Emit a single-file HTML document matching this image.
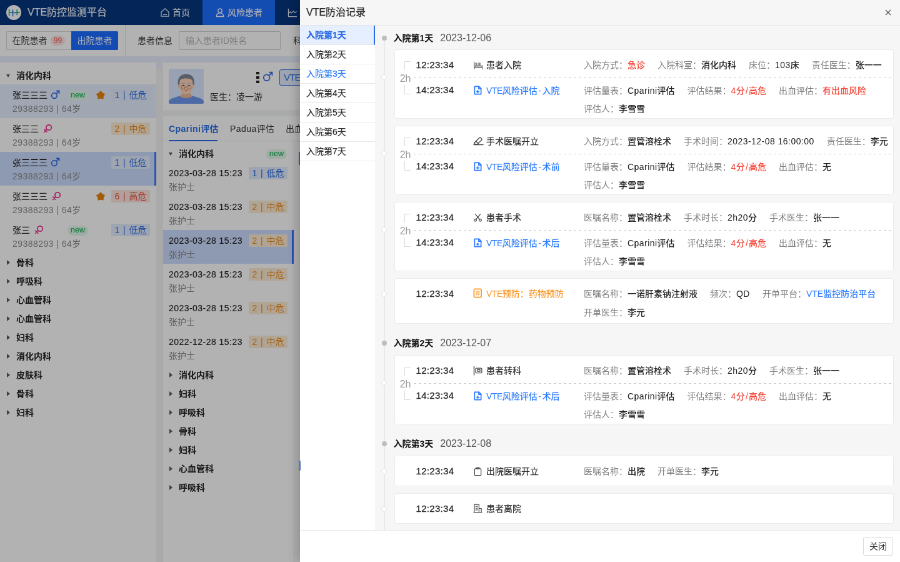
<!DOCTYPE html><html lang="zh"><head><meta charset="utf-8"><title>VTE防控监测平台</title><style>
*{box-sizing:border-box;margin:0;padding:0}
html,body{width:900px;height:562px;overflow:hidden;background:#fff}
body{font-family:"Liberation Sans","Noto Sans CJK SC",sans-serif;font-size:14px;color:#333}
#root{will-change:transform;position:absolute;left:0;top:0;width:1440px;height:900px;transform:scale(.625);transform-origin:0 0;overflow:hidden;background:#e8eefc}
.abs{position:absolute}
.n{letter-spacing:.46px}.w{letter-spacing:1px}
/* top bar */
#top{position:absolute;left:0;top:0;width:1440px;height:40px;background:#07367f;color:#fff}
#top .logo{position:absolute;left:10px;top:8px;width:24px;height:24px;border-radius:50%;background:#fff}
#top .title{position:absolute;left:44px;-webkit-text-stroke:.2px #f2f5fa;top:0;line-height:40px;font-size:16px;color:#f2f5fa;white-space:nowrap}
#top .nav{position:absolute;top:0;height:40px;line-height:40px;font-size:14px;color:#e6ecf7;white-space:nowrap;-webkit-text-stroke:.2px #e6ecf7}
#top .nav.on{background:#1e6fff;color:#fff}
/* toolbar */
#bar{position:absolute;left:0;top:40px;width:1440px;height:50px;background:#fff}
.seg{position:absolute;top:10px;height:30px;line-height:28px;font-size:14px;white-space:nowrap}
/* left panel */
#lp{position:absolute;left:0;top:100px;width:250px;height:800px;background:#fff}
.dh{position:absolute;left:0;height:30px;line-height:30px;font-weight:700;font-size:14px;color:#222;white-space:nowrap}
.dh i{position:absolute;top:12px;width:0;height:0;border:4px solid transparent}
.dh i.r{border-left:5px solid #5a5a5a;border-right:0;top:11px}
.dh i.d{border-top:5px solid #5a5a5a;border-bottom:0;border-left-width:3.5px;border-right-width:3.5px;top:13px}
.it{position:absolute;left:0;height:54px;white-space:nowrap}
.it .l1{position:absolute;left:20px;top:5.500px;line-height:23px;color:#333;-webkit-text-stroke:.15px #333}
.it .l2{position:absolute;left:20px;top:28px;line-height:23px;color:#8c8c8c}
.tag{position:absolute;height:20px;line-height:20px;width:62px;text-align:center;border-radius:2px;font-size:14px;white-space:nowrap}
.tag.lo{color:#2b6de5;background:#e2ebfd}
.tag.mi{color:#f08a19;background:#fdecd6}
.tag.hi{color:#e8543c;background:#fde4df}
.new{position:absolute;height:16px;line-height:15px;width:33px;text-align:center;border-radius:8px;font-size:12.500px;color:#22b862;background:#e2f7ea;-webkit-text-stroke:.2px #22b862}
/* right panel */
.card{position:absolute;background:#fff}
/* modal */
#mask{position:absolute;left:0;top:0;width:1440px;height:900px;background:rgba(0,0,0,.3)}
#modal{position:absolute;left:480px;top:0;width:960px;height:900px;background:#fff;box-shadow:-5px 0 14px rgba(0,0,0,.2)}
#mh{position:absolute;left:0;top:0;width:960px;height:41px;background:#f6f6f6;border-bottom:1px solid #e5e5e5}
#mh .t{position:absolute;left:10px;top:0;line-height:40px;font-size:16px;color:#2a2a2a;-webkit-text-stroke:.25px #2a2a2a}
#tabs{position:absolute;left:0;top:41px;width:120px}
#tabs div{height:31px;line-height:30px;border-bottom:1px solid #e6e6e6;padding-left:10px;font-size:14px;color:#2a2a2a;white-space:nowrap;-webkit-text-stroke:.2px}
#tabs div.on{background:#e6efff;color:#2b6de5;font-weight:700;border-right:2px solid #2b6de5}
#tabs div.hv{color:#2b7bff}
#mc{position:absolute;left:120px;top:41px;width:840px;height:807px;background:#f6f6f6;overflow:hidden}
#mf{position:absolute;left:0;top:848px;width:960px;height:52px;background:#fff;border-top:1px solid #e8e8e8}
#mf .btn{position:absolute;left:901px;top:10px;width:48px;height:30px;line-height:28px;text-align:center;border:1px solid #d9d9d9;border-radius:3px;font-size:14px;color:#333;background:#fff}
.tl{position:absolute;left:13.7px;top:19px;width:2px;height:800px;background:#e9e9e9}
.dot{position:absolute;left:10.7px;width:8px;height:8px;border-radius:50%;background:#bdbdbd}
.cir{position:absolute;left:10.2px;width:9px;height:9px;border-radius:50%;background:#fff;border:1px solid #e2e2e2}
.day{position:absolute;left:29.5px;height:38px;line-height:38px;white-space:nowrap;font-weight:700;color:#111;font-size:14px}
.day span{font-weight:400;font-size:16px;color:#555;margin-left:11px}
.mcard{position:absolute;left:31px;width:798.500px;background:#fff;border:1px solid #ebebeb;border-radius:3px}
.mcard .tm{position:absolute;left:33.5px;font-size:15px;letter-spacing:.3px;color:#2a2a2a;line-height:30px;margin-top:-.5px;-webkit-text-stroke:.3px #2a2a2a;white-space:nowrap}
.mcard .ev{position:absolute;left:146px;line-height:30px;font-size:14px;font-weight:500;color:#333;white-space:nowrap}.mcard .ev i{font-style:normal;letter-spacing:-.5px}.mcard .ev u{text-decoration:none;padding:0 1.6px}
.mcard .ev.b{color:#2b7bff}
.mcard .ev.o{color:#fa9a2c}
.mcard svg.ic{position:absolute;left:125px;width:15px;height:15px}
.mcard .ln{position:absolute;left:302px;line-height:30px;font-size:14px;white-space:nowrap;color:#808080}
.mcard .ln b{font-weight:500;color:#222;margin-right:20px}
.mcard .ln b.r{color:#f5483b}
.mcard .ln b.l{color:#2b7bff}
.mcard .dash{position:absolute;left:30px;right:0;top:43.700px;height:1.600px;background:repeating-linear-gradient(90deg,#c9c9c9 0 4.500px,transparent 4.500px 8px)}
.mcard .h2{position:absolute;left:7.700px;top:34.500px;line-height:22px;font-size:16px;color:#999}
.mcard .br{position:absolute;left:15px;width:10px;border-left:1px solid #d9d9d9}
.mcard .br.t{top:18px;height:14px;border-top:1px solid #d9d9d9}
.mcard .br.bt{top:56px;height:14.500px;border-bottom:1px solid #d9d9d9}
</style></head><body><div id="root">
<div id="top">
<div class="logo"><svg width="24" height="24" viewBox="0 0 24 24" fill="none" stroke-width="1.800" stroke-linecap="round"><path d="M4.700 7.500v9M4.700 12h5.500" stroke="#43b36f"/><path d="M17.200 8v7.500M17.200 12h3.800" stroke="#43b36f"/><path d="M10.400 8.200v9.300M10.400 12.300h6" stroke="#2f86e0"/></svg></div>
<div class="title">VTE防控监测平台</div>
<svg class="abs" style="left:256px;top:12px" width="16" height="16" viewBox="0 0 16 16" fill="none" stroke="#e6ecf7" stroke-width="1.3" stroke-linejoin="round" stroke-linecap="round"><path d="M2 7.200L8 1.800l6 5.400V14.200H2z"/><path d="M5.500 11.300h5"/></svg>
<div class="nav" style="left:276px">首页</div>
<div class="nav on" style="left:323.500px;width:116.500px"></div>
<svg class="abs" style="left:344px;top:12px" width="16" height="16" viewBox="0 0 16 16" fill="none" stroke="#fff" stroke-width="1.3" stroke-linejoin="round" stroke-linecap="round"><circle cx="8" cy="5" r="3.200"/><path d="M2.300 14.500c0-3.600 2.400-5.600 5.700-5.600s5.700 2 5.700 5.600z"/></svg>
<div class="nav" style="left:364px;color:#fff">风险患者</div>
<svg class="abs" style="left:460px;top:12.500px" width="16" height="15" viewBox="0 0 17 16" fill="none" stroke="#e6ecf7" stroke-width="1.300" stroke-linejoin="round" stroke-linecap="round"><path d="M1.500 1.500v13h14"/><path d="M1.500 10l3-4 2.500 2.500 3-3.500 2.500 3 2.500-2"/></svg>
</div>
<div id="bar">
<div class="seg" style="left:10px;width:104px;border:1px solid #d9d9d9;border-right:0;border-radius:2px 0 0 2px;color:#333"><span class="abs" style="left:8.500px">在院患者</span><span class="abs" style="left:70px;top:6px;height:16px;line-height:16px;width:23px;text-align:center;border-radius:8px;background:#fde2e0;color:#f0574a;font-size:12px">99</span></div>
<div class="seg" style="left:114px;width:75px;background:#1e6cff;color:#fff;border-radius:0 2px 2px 0;line-height:30px;text-align:center">出院患者</div>
<div class="abs" style="left:200px;top:0;width:1px;height:50px;background:#e3e3e3"></div>
<div class="seg" style="left:220px;line-height:30px;color:#333">患者信息</div>
<div class="seg" style="left:286px;width:163px;border:1px solid #d0d0d0;border-radius:2px;color:#b5b5b5;padding-left:10px">输入患者ID姓名</div>
<div class="seg" style="left:469px;line-height:30px;color:#333">科室</div>
</div>
<div id="lp">
<div class="dh" style="top:6px;left:0"><i class="d" style="left:10px"></i><span class="abs" style="left:26px">消化内科</span></div>
<div class="it" style="top:35px;width:250px;background:#e6eeff;"><div class="l1">张三三三</div><div class="l2"><span class="n">29388293 | 64</span>岁</div><svg class="abs" style="left:81px;top:9px" width="15" height="15" viewBox="0 0 16 16" fill="none" stroke="#2b6de5" stroke-width="1.7" stroke-linecap="round"><circle cx="6.3" cy="9.7" r="4.6"/><path d="M9.6 6.4L14.3 1.7M10.2 1.5h4.3v4.3"/></svg><div class="new" style="left:108px;top:10px">new</div><svg class="abs" style="left:153px;top:9px" width="16" height="16" viewBox="0 0 16 16"><path d="M8.00 2.80L10.17 5.61L13.52 6.81L11.52 9.74L11.41 13.29L8.00 12.30L4.59 13.29L4.48 9.74L2.48 6.81L5.83 5.61z" fill="#e9850a" stroke="#e9850a" stroke-width="2.600" stroke-linejoin="round"/></svg><div class="tag lo" style="left:178px;top:7px"><span class="w">1 | </span>低危</div></div>
<div class="it" style="top:89px;width:250px;"><div class="l1">张三三</div><div class="l2"><span class="n">29388293 | 64</span>岁</div><svg class="abs" style="left:68.5px;top:9px" width="15" height="15" viewBox="0 0 16 16" fill="none" stroke="#ee3a94" stroke-width="2" stroke-linecap="round"><circle cx="9.7" cy="6.3" r="4.5"/><path d="M6.4 9.6L1.8 14.2M2 9.8l4.2 4.2"/></svg><div class="tag mi" style="left:178px;top:7px"><span class="w">2 | </span>中危</div></div>
<div class="it" style="top:143px;width:250px;background:#ccdcff;"><div class="abs" style="right:0;top:0;width:3px;height:54px;background:#3b78ff"></div><div class="l1">张三三三</div><div class="l2"><span class="n">29388293 | 64</span>岁</div><svg class="abs" style="left:81px;top:9px" width="15" height="15" viewBox="0 0 16 16" fill="none" stroke="#2b6de5" stroke-width="1.7" stroke-linecap="round"><circle cx="6.3" cy="9.7" r="4.6"/><path d="M9.6 6.4L14.3 1.7M10.2 1.5h4.3v4.3"/></svg><div class="tag lo" style="left:178px;top:7px"><span class="w">1 | </span>低危</div></div>
<div class="it" style="top:197px;width:250px;"><div class="l1">张三三三</div><div class="l2"><span class="n">29388293 | 64</span>岁</div><svg class="abs" style="left:82.5px;top:9px" width="15" height="15" viewBox="0 0 16 16" fill="none" stroke="#ee3a94" stroke-width="2" stroke-linecap="round"><circle cx="9.7" cy="6.3" r="4.5"/><path d="M6.4 9.6L1.8 14.2M2 9.8l4.2 4.2"/></svg><svg class="abs" style="left:153px;top:9px" width="16" height="16" viewBox="0 0 16 16"><path d="M8.00 2.80L10.17 5.61L13.52 6.81L11.52 9.74L11.41 13.29L8.00 12.30L4.59 13.29L4.48 9.74L2.48 6.81L5.83 5.61z" fill="#e9850a" stroke="#e9850a" stroke-width="2.600" stroke-linejoin="round"/></svg><div class="tag hi" style="left:178px;top:7px"><span class="w">6 | </span>高危</div></div>
<div class="it" style="top:251px;width:250px;"><div class="l1">张三</div><div class="l2"><span class="n">29388293 | 64</span>岁</div><svg class="abs" style="left:54.5px;top:9px" width="15" height="15" viewBox="0 0 16 16" fill="none" stroke="#ee3a94" stroke-width="2" stroke-linecap="round"><circle cx="9.7" cy="6.3" r="4.5"/><path d="M6.4 9.6L1.8 14.2M2 9.8l4.2 4.2"/></svg><div class="new" style="left:108px;top:10px">new</div><div class="tag lo" style="left:178px;top:7px"><span class="w">1 | </span>低危</div></div>
<div class="dh" style="top:305px"><i class="r" style="left:11px"></i><span class="abs" style="left:26px">骨科</span></div>
<div class="dh" style="top:335px"><i class="r" style="left:11px"></i><span class="abs" style="left:26px">呼吸科</span></div>
<div class="dh" style="top:365px"><i class="r" style="left:11px"></i><span class="abs" style="left:26px">心血管科</span></div>
<div class="dh" style="top:395px"><i class="r" style="left:11px"></i><span class="abs" style="left:26px">心血管科</span></div>
<div class="dh" style="top:425px"><i class="r" style="left:11px"></i><span class="abs" style="left:26px">妇科</span></div>
<div class="dh" style="top:455px"><i class="r" style="left:11px"></i><span class="abs" style="left:26px">消化内科</span></div>
<div class="dh" style="top:485px"><i class="r" style="left:11px"></i><span class="abs" style="left:26px">皮肤科</span></div>
<div class="dh" style="top:515px"><i class="r" style="left:11px"></i><span class="abs" style="left:26px">骨科</span></div>
<div class="dh" style="top:545px"><i class="r" style="left:11px"></i><span class="abs" style="left:26px">妇科</span></div>
</div>
<div class="abs" style="left:260px;top:170px;width:1180px;height:20px;background:#f3f4f4"></div>
<div class="card" style="left:260px;top:100px;width:1180px;height:76px">
<svg class="abs" style="left:10px;top:10px" width="56" height="56" viewBox="0 0 56 56"><rect width="56" height="56" rx="2.500" fill="#dbe8ff"/><path d="M0 56V53c0-3 3-5 8-6.500l9-3h22l9 3c5 1.500 8 3.500 8 6.500V53.500a2.500 2.500 0 0 1-2.500 2.500H2.500A2.500 2.500 0 0 1 0 53.500z" fill="#6f97ee"/><path d="M21.500 36h13v5l4 2.500c-4 4.500-17 4.500-21 0l4-2.500z" fill="#f0b897"/><path d="M14.800 25c-1.500-10 4-16.500 13.200-16.500S42 15 40.700 25l-1.700 3H16.500z" fill="#7e8796"/><ellipse cx="16.800" cy="27.500" rx="1.800" ry="2.600" fill="#f7c4a4"/><ellipse cx="38.800" cy="27.500" rx="1.800" ry="2.600" fill="#f7c4a4"/><path d="M17.300 22c0-4.500 3-6.500 10.500-6.500s10.500 2 10.500 6.500v8.500c0 5.500-4.500 10-10.500 10S17.300 36 17.300 30.500z" fill="#ffd3b6"/><path d="M20.500 23.600h5M30 23.600h5" stroke="#c4c7cf" stroke-width="1.600" stroke-linecap="round"/><circle cx="23.300" cy="26.800" r="1.100" fill="#4a2f25"/><circle cx="32.300" cy="26.800" r="1.100" fill="#4a2f25"/><circle cx="23" cy="29.500" r="3.100" fill="none" stroke="#8a6656" stroke-width=".7"/><circle cx="32.600" cy="29.500" r="3.100" fill="none" stroke="#8a6656" stroke-width=".7"/><path d="M26.100 29.300h3.400" stroke="#8a6656" stroke-width=".7"/><path d="M25 33.300c1.800.9 4 .9 5.800 0-.8 2.500-5 2.500-5.800 0z" fill="#d4735a"/></svg>
<div class="abs" style="left:149.500px;top:15px;width:5px;height:4px;background:#222;box-shadow:0 7px 0 #222,0 14px 0 #222"></div>
<svg class="abs" style="left:160px;top:14px" width="17" height="17" viewBox="0 0 16 16" fill="none" stroke="#2b6de5" stroke-width="1.7" stroke-linecap="round"><circle cx="6.3" cy="9.7" r="4.6"/><path d="M9.6 6.4L14.3 1.7M10.2 1.5h4.3v4.3"/></svg>
<div class="abs" style="left:187px;top:10.500px;width:60px;height:26px;line-height:24px;border:1px solid #2b6de5;border-radius:3px;background:#e3ecfd;color:#2b6de5;font-size:15.500px;letter-spacing:-1.100px;padding-left:6px">VTE</div>
<div class="abs" style="left:76px;top:44px;line-height:22px;color:#333;white-space:nowrap">医生：凌一游</div>
</div>
<div class="card" style="left:260px;top:186px;width:1180px;height:714px">
<div class="abs" style="left:0;top:39px;width:1180px;height:1px;background:#ebebeb"></div>
<div class="abs" style="left:10px;top:8px;line-height:24px;font-weight:700;color:#2b6de5;white-space:nowrap"><span class="n">Cparini</span>评估</div>
<div class="abs" style="left:10px;top:37.500px;width:78px;height:2.500px;background:#2b6de5"></div>
<div class="abs" style="left:108px;top:8px;line-height:24px;color:#333;white-space:nowrap"><span class="n">Padua</span>评估</div>
<div class="abs" style="left:197px;top:8px;line-height:24px;color:#333;white-space:nowrap">出血评估</div>
<div class="abs" style="left:210px;top:40px;width:1px;height:674px;background:#e6e6e6"></div>
<div class="abs" style="left:217.500px;top:57px;width:3px;height:21px;background:#5a8cf0"></div>
<div class="dh" style="top:45px"><i class="d" style="left:10px"></i><span class="abs" style="left:26px">消化内科</span></div>
<div class="new" style="left:166px;top:53px">new</div>
<div class="it" style="top:74px;width:210px;"><div class="l1" style="left:10px;top:5.500px;color:#222"><span class="n">2023-03-28 15:23</span></div><div class="l2" style="left:10px;top:28px">张护士</div><div class="tag lo" style="left:138px;top:7px"><span class="w">1 | </span>低危</div></div>
<div class="it" style="top:128px;width:210px;"><div class="l1" style="left:10px;top:5.500px;color:#222"><span class="n">2023-03-28 15:23</span></div><div class="l2" style="left:10px;top:28px">张护士</div><div class="tag mi" style="left:138px;top:7px"><span class="w">2 | </span>中危</div></div>
<div class="it" style="top:182px;width:210px;background:#ccdcff;"><div class="abs" style="right:0;top:0;width:3px;height:54px;background:#3b78ff"></div><div class="l1" style="left:10px;top:5.500px;color:#222"><span class="n">2023-03-28 15:23</span></div><div class="l2" style="left:10px;top:28px">张护士</div><div class="tag mi" style="left:138px;top:7px"><span class="w">2 | </span>中危</div></div>
<div class="it" style="top:236px;width:210px;"><div class="l1" style="left:10px;top:5.500px;color:#222"><span class="n">2023-03-28 15:23</span></div><div class="l2" style="left:10px;top:28px">张护士</div><div class="tag mi" style="left:138px;top:7px"><span class="w">2 | </span>中危</div></div>
<div class="it" style="top:290px;width:210px;"><div class="l1" style="left:10px;top:5.500px;color:#222"><span class="n">2023-03-28 15:23</span></div><div class="l2" style="left:10px;top:28px">张护士</div><div class="tag mi" style="left:138px;top:7px"><span class="w">2 | </span>中危</div></div>
<div class="it" style="top:344px;width:210px;"><div class="l1" style="left:10px;top:5.500px;color:#222"><span class="n">2022-12-28 15:23</span></div><div class="l2" style="left:10px;top:28px">张护士</div><div class="tag mi" style="left:138px;top:7px"><span class="w">2 | </span>中危</div></div>
<div class="dh" style="top:399px"><i class="r" style="left:11px"></i><span class="abs" style="left:26px">消化内科</span></div>
<div class="dh" style="top:429px"><i class="r" style="left:11px"></i><span class="abs" style="left:26px">妇科</span></div>
<div class="dh" style="top:459px"><i class="r" style="left:11px"></i><span class="abs" style="left:26px">呼吸科</span></div>
<div class="dh" style="top:489px"><i class="r" style="left:11px"></i><span class="abs" style="left:26px">骨科</span></div>
<div class="dh" style="top:519px"><i class="r" style="left:11px"></i><span class="abs" style="left:26px">妇科</span></div>
<div class="dh" style="top:549px"><i class="r" style="left:11px"></i><span class="abs" style="left:26px">心血管科</span></div>
<div class="dh" style="top:579px"><i class="r" style="left:11px"></i><span class="abs" style="left:26px">呼吸科</span></div>
</div>
<div class="abs" style="left:250px;top:109px;width:10.500px;height:800px;background:#f2f3f2"></div>
<div id="mask"></div>
<div id="modal"><div id="mh"><div class="t">VTE防治记录</div><svg class="abs" style="left:936px;top:15px" width="10" height="10" viewBox="0 0 10 10" stroke="#555" stroke-width="1.300"><path d="M1 1l8 8M9 1l-8 8"/></svg></div>
<div id="tabs"><div class="on">入院第1天</div><div>入院第2天</div><div class="hv">入院第3天</div><div>入院第4天</div><div>入院第5天</div><div>入院第6天</div><div>入院第7天</div></div>
<div id="mc"><div class="tl"></div>
<div class="dot" style="top:15.5px"></div><div class="day" style="top:0.5px">入院第1天<span>2023-12-06</span></div>
<div class="mcard" style="top:38px;height:111px"><div class="tm" style="top:9.3px">12:23:34</div><svg class="ic" style="top:16.8px;width:16px;left:124.500px" viewBox="0 0 16 16" fill="none" stroke="#666" stroke-width="1.300" stroke-linejoin="round" stroke-linecap="round"><path d="M1.300 2.500v11.500M1.300 12h13.700M15 14V8.500" stroke="#555"/><path d="M3 8h8.500l3 1.500V11.500H3z" fill="#bdbdbd" stroke="#8a8a8a"/><circle cx="5" cy="5.500" r="1.300"/><rect x="9" y="4" width="2.500" height="3.500" fill="#888" stroke="#888"/></svg><div class="ev " style="top:9.3px">患者入院</div><div class="ln" style="top:9.3px">入院方式：<b class="r">急诊</b>入院科室：<b>消化内科</b>床位：<b><span class="n">103</span>床</b>责任医生：<b>张一一</b></div><div class="tm" style="top:49.8px">14:23:34</div><svg class="ic" style="top:57.3px" viewBox="0 0 16 16" fill="none" stroke="#2b7bff" stroke-width="1.800" stroke-linejoin="round" stroke-linecap="round"><path d="M2.500 1.500h7.500l3.500 3.500v9.500h-11z"/><path d="M9.500 1.500v4h4"/><path d="M8 8.300v4M6 10.300h4" stroke-width="1.700"/></svg><div class="ev b" style="top:49.8px"><i>VTE</i>风险评估<u>-</u>入院</div><div class="ln" style="top:49.8px">评估量表：<b><span class="n">Cparini</span>评估</b>评估结果：<b class="r"><span class="n">4</span>分<span style="padding:0 1.1px">/</span>高危</b>出血评估：<b class="r">有出血风险</b></div><div class="ln" style="top:79.0px">评估人：<b>李雪雪</b></div><div class="dash"></div><div class="br t"></div><div class="br bt"></div><div class="h2">2h</div></div>
<div class="cir" style="top:78px"></div>
<div class="mcard" style="top:160px;height:111px"><div class="tm" style="top:9.3px">12:23:34</div><svg class="ic" style="top:16.8px;width:17px;height:17px;margin-top:-2px" viewBox="0 0 17 17" fill="none" stroke="#444" stroke-width="1.300" stroke-linejoin="round" stroke-linecap="round"><path d="M1.500 12L10 3.500a1.500 1.500 0 0 1 2.100 0l1.400 1.400a1.500 1.500 0 0 1 0 2.100L6.500 14H3.500z"/><path d="M4.500 9l3.500 3.500M1 14.500h15"/></svg><div class="ev " style="top:9.3px">手术医嘱开立</div><div class="ln" style="top:9.3px">入院方式：<b>置管溶栓术</b>手术时间：<b><span class="n">2023-12-08 16:00:00</span></b>责任医生：<b>李元</b></div><div class="tm" style="top:49.8px">14:23:34</div><svg class="ic" style="top:57.3px" viewBox="0 0 16 16" fill="none" stroke="#2b7bff" stroke-width="1.800" stroke-linejoin="round" stroke-linecap="round"><path d="M2.500 1.500h7.500l3.500 3.500v9.500h-11z"/><path d="M9.500 1.500v4h4"/><path d="M8 8.300v4M6 10.300h4" stroke-width="1.700"/></svg><div class="ev b" style="top:49.8px"><i>VTE</i>风险评估<u>-</u>术前</div><div class="ln" style="top:49.8px">评估量表：<b><span class="n">Cparini</span>评估</b>评估结果：<b class="r"><span class="n">4</span>分<span style="padding:0 1.1px">/</span>高危</b>出血评估：<b>无</b></div><div class="ln" style="top:79.0px">评估人：<b>李雪雪</b></div><div class="dash"></div><div class="br t"></div><div class="br bt"></div><div class="h2">2h</div></div>
<div class="cir" style="top:200px"></div>
<div class="mcard" style="top:282px;height:111px"><div class="tm" style="top:9.3px">12:23:34</div><svg class="ic" style="top:16.8px" viewBox="0 0 16 16" fill="none" stroke="#444" stroke-width="1.300" stroke-linejoin="round" stroke-linecap="round"><circle cx="3.800" cy="12" r="2"/><circle cx="12.200" cy="12" r="2"/><path d="M5 10.500L12.500 1.500M11 10.500L3.500 1.500"/></svg><div class="ev " style="top:9.3px">患者手术</div><div class="ln" style="top:9.3px">医嘱名称：<b>置管溶栓术</b>手术时长：<b><span class="n">2h20</span>分</b>手术医生：<b>张一一</b></div><div class="tm" style="top:49.8px">14:23:34</div><svg class="ic" style="top:57.3px" viewBox="0 0 16 16" fill="none" stroke="#2b7bff" stroke-width="1.800" stroke-linejoin="round" stroke-linecap="round"><path d="M2.500 1.500h7.500l3.500 3.500v9.500h-11z"/><path d="M9.500 1.500v4h4"/><path d="M8 8.300v4M6 10.300h4" stroke-width="1.700"/></svg><div class="ev b" style="top:49.8px"><i>VTE</i>风险评估<u>-</u>术后</div><div class="ln" style="top:49.8px">评估量表：<b><span class="n">Cparini</span>评估</b>评估结果：<b class="r"><span class="n">4</span>分<span style="padding:0 1.1px">/</span>高危</b>出血评估：<b>无</b></div><div class="ln" style="top:79.0px">评估人：<b>李雪雪</b></div><div class="dash"></div><div class="br t"></div><div class="br bt"></div><div class="h2">2h</div></div>
<div class="cir" style="top:322px"></div>
<div class="mcard" style="top:404px;height:73px"><div class="tm" style="top:9.3px">12:23:34</div><svg class="ic" style="top:16.8px;margin-top:-1.500px;height:16px" viewBox="0 0 16 16" fill="none" stroke="#fa9a2c" stroke-width="1.900" stroke-linejoin="round" stroke-linecap="round"><rect x="1.500" y="1" width="12.500" height="14" rx="1.800"/><path d="M4.500 5h6.500M4.500 8h6.500M4.500 11h6.500M6.300 4.500v7M9.300 4.500v7" stroke-width="1.100" opacity=".75"/></svg><div class="ev o" style="top:9.3px"><i>VTE</i>预防：药物预防</div><div class="ln" style="top:9.3px">医嘱名称：<b>一诺肝素钠注射液</b>频次：<b><span class="n">QD</span></b>开单平台：<b class="l">VTE监控防治平台</b></div><div class="ln" style="top:38.5px">开单医生：<b>李元</b></div></div>
<div class="cir" style="top:424.500px"></div>
<div class="dot" style="top:504px"></div><div class="day" style="top:489px">入院第2天<span>2023-12-07</span></div>
<div class="mcard" style="top:527px;height:111px"><div class="tm" style="top:9.3px">12:23:34</div><svg class="ic" style="top:16.8px;margin-top:-1px;height:16px" viewBox="0 0 16 16" fill="none" stroke="#444" stroke-width="1.300" stroke-linejoin="round" stroke-linecap="round"><path d="M1.600 1v14.500" stroke-width="1.500"/><rect x="4.300" y="3.800" width="10.500" height="8.200" rx="1"/><rect x="7.300" y="6.300" width="4.500" height="3"/></svg><div class="ev " style="top:9.3px">患者转科</div><div class="ln" style="top:9.3px">医嘱名称：<b>置管溶栓术</b>手术时长：<b><span class="n">2h20</span>分</b>手术医生：<b>张一一</b></div><div class="tm" style="top:49.8px">14:23:34</div><svg class="ic" style="top:57.3px" viewBox="0 0 16 16" fill="none" stroke="#2b7bff" stroke-width="1.800" stroke-linejoin="round" stroke-linecap="round"><path d="M2.500 1.500h7.500l3.500 3.500v9.500h-11z"/><path d="M9.500 1.500v4h4"/><path d="M8 8.300v4M6 10.300h4" stroke-width="1.700"/></svg><div class="ev b" style="top:49.8px"><i>VTE</i>风险评估<u>-</u>术后</div><div class="ln" style="top:49.8px">评估量表：<b><span class="n">Cparini</span>评估</b>评估结果：<b class="r"><span class="n">4</span>分<span style="padding:0 1.1px">/</span>高危</b>出血评估：<b>无</b></div><div class="ln" style="top:79.0px">评估人：<b>李雪雪</b></div><div class="dash"></div><div class="br t"></div><div class="br bt"></div><div class="h2">2h</div></div>
<div class="cir" style="top:567px"></div>
<div class="dot" style="top:664.5px"></div><div class="day" style="top:649.5px">入院第3天<span>2023-12-08</span></div>
<div class="mcard" style="top:688px;height:49px"><div class="tm" style="top:9.3px">12:23:34</div><svg class="ic" style="top:16.8px" viewBox="0 0 16 16" fill="none" stroke="#444" stroke-width="1.300" stroke-linejoin="round" stroke-linecap="round"><rect x="2.500" y="3" width="11" height="11.500" rx="1"/><path d="M5.500 3V1.500h5V3z"/></svg><div class="ev " style="top:9.3px">出院医嘱开立</div><div class="ln" style="top:9.3px">医嘱名称：<b>出院</b>开单医生：<b>李元</b></div></div>
<div class="cir" style="top:708.500px"></div>
<div class="mcard" style="top:748px;height:49px"><div class="tm" style="top:9.3px">12:23:34</div><svg class="ic" style="top:16.8px;margin-top:-.5px" viewBox="0 0 16 16" fill="none" stroke="#444" stroke-width="1.300" stroke-linejoin="round" stroke-linecap="round"><path d="M2 14.500V1.300h8v13.200M1 14.500h14M10 8h4v6.500"/><path d="M4.500 4.500h3M4.500 7.500h3M4.500 10.500h3"/></svg><div class="ev " style="top:9.3px">患者离院</div></div>
<div class="cir" style="top:768.500px"></div>
</div>
<div class="abs" style="left:-2px;top:737px;width:2.500px;height:16px;background:#5878be;border-radius:1px"></div>
<div id="mf"><div class="btn">关闭</div></div></div>
</div></body></html>
